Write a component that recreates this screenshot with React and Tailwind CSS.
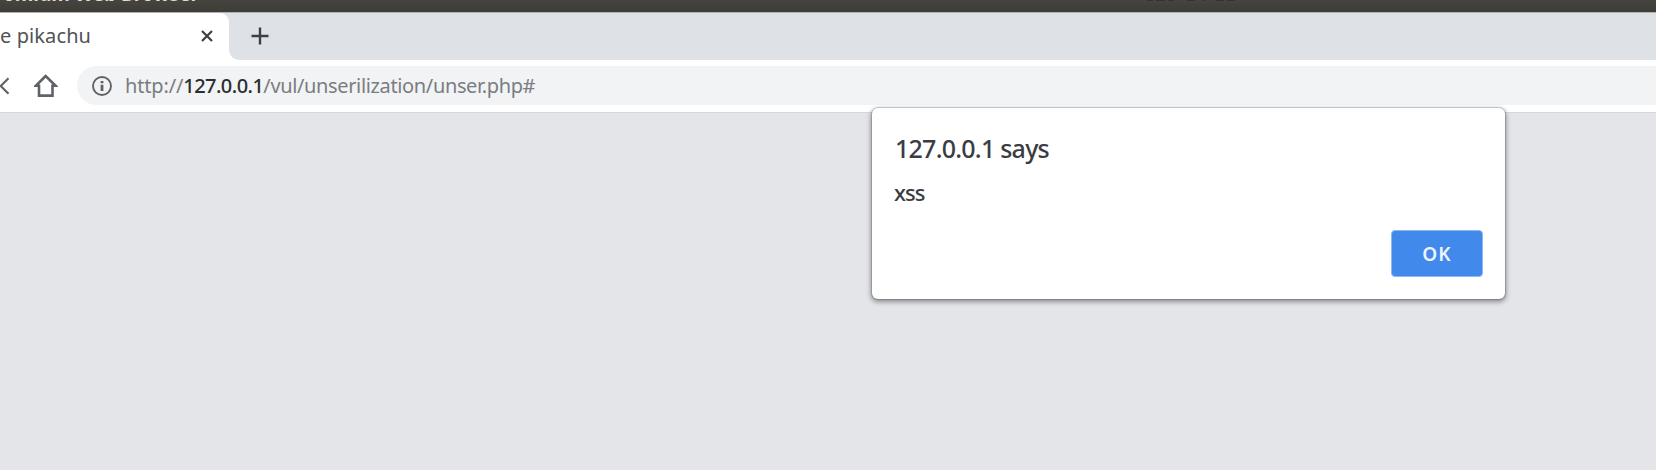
function TitleBar() {
  return (
    <div className="relative h-3 overflow-hidden bg-linear-to-b from-[#454440] to-[#3d3c37]">
      <span className="absolute right-[1457px] -top-[18px] text-[19px] leading-6 font-bold whitespace-nowrap text-[#dfdbd2]">
        Chromium Web Browser
      </span>
      <svg className="absolute top-0 left-[1146px] h-0.5 w-[90px] opacity-40" viewBox="0 0 90 2" stroke="#1f1e1b" strokeWidth="1">
        <path d="M1 .5h6M10 .5h9M22 .5h6M41 .5h8M56 .5h3M70 .5h8M81 .5h8" />
      </svg>
    </div>
  );
}

function TabStrip() {
  return (
    <div className="flex h-12 border-t border-[#b0b1b1] bg-[#dee1e6]">
      <div className="flex w-[229px] items-center rounded-tr-[9px] bg-white">
        <div className="w-[201px] shrink-0 pb-0.5">
          <span className="block whitespace-nowrap text-xl leading-[42px] tracking-[0.1px] text-[#505357]">e pikachu</span>
        </div>
        <svg className="mb-[2px] h-3 w-3" viewBox="0 0 12 12" fill="none" stroke="#3c4043" strokeWidth="2.2">
          <path d="M1 1l10 10M11 1L1 11" />
        </svg>
      </div>
      <svg className="h-3 w-3 self-end" viewBox="0 0 12 12" fill="#fff">
        <path d="M0 0C0 8 4 12 12 12H0Z" />
      </svg>
      <svg className="mt-[14px] ml-[10px] h-[18px] w-[18px]" viewBox="0 0 18 18" fill="none" stroke="#3c4043" strokeWidth="2.4">
        <path d="M9 0.5v17M0.5 9h17" />
      </svg>
    </div>
  );
}

function Toolbar() {
  return (
    <div className="flex h-[53px] border-b border-[#d6d7da] bg-white pt-1.5">
      <svg className="mt-[11px] h-[18px] w-[10px]" viewBox="0 0 10 18" fill="none" stroke="#5f6368" strokeWidth="2.2">
        <path d="M8.5 1.2L0.7 9L8.5 16.8" />
      </svg>
      <svg className="mt-2 ml-6 h-6 w-6" viewBox="0 0 24 24" fill="none" stroke="#5f6368" strokeWidth="2.6">
        <path d="M11.7 2L1.8 11.8H5V21.6H18.5V11.8H21.6Z" />
      </svg>
      <div className="ml-[19px] flex h-[39px] flex-1 items-center rounded-l-full bg-[#f1f3f4] pl-[15px]">
        <svg className="h-5 w-5" viewBox="0 0 20 20" fill="none" stroke="#5f6368" strokeWidth="1.9">
          <circle cx="10" cy="10" r="9" />
          <path d="M10 8.7v6.3M10 5v2.3" strokeWidth="2.8" />
        </svg>
        <span className="ml-[13px] whitespace-nowrap text-xl text-[#7a7d81]">
          <span className="tracking-[-0.15px]">http://</span>
          <span className="font-medium tracking-[-0.55px] text-[#2b2c30]">127.0.0.1</span>
          <span className="tracking-[-0.36px]">/vul/unserilization/unser.php#</span>
        </span>
      </div>
    </div>
  );
}

function AlertDialog() {
  return (
    <div className="absolute top-[108px] left-[872px] flex h-[191px] w-[633px] flex-col rounded-[6px] bg-white px-[23px] shadow-[0_0_1px_1px_rgba(0,0,0,0.16),0_2px_5px_1px_rgba(0,0,0,0.38)]">
      <h1 className="mt-[22px] h-9 self-start whitespace-nowrap text-[25px] leading-9 font-medium tracking-[-0.75px] text-[#3a3c42]">127.0.0.1 says</h1>
      <p className="mt-[10px] -ml-px h-8 self-start text-[22px] leading-8 font-medium tracking-[-0.9px] text-[#3a3c42]">xss</p>
      <button className="mt-[22px] -mr-px h-[47px] w-[92px] self-end rounded-[4px] border border-[#8cb9f5] bg-[#4189eb] pt-px text-[19px] font-semibold tracking-[1.2px] text-[#eef4ff]">
        OK
      </button>
    </div>
  );
}

export default function App() {
  return (
    <div className="relative h-[470px] w-[1656px] overflow-hidden bg-[#e4e5e9] font-['Noto_Sans',sans-serif]">
      <TitleBar />
      <TabStrip />
      <Toolbar />
      <AlertDialog />
    </div>
  );
}
